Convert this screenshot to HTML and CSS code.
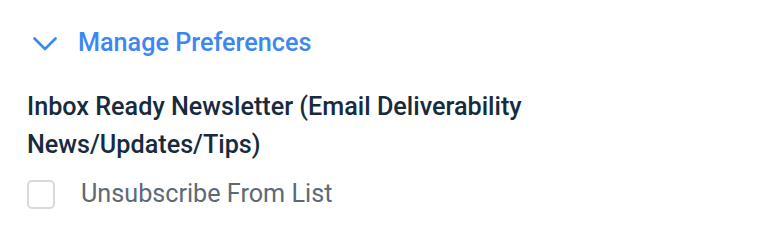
FILE: index.html
```html
<!DOCTYPE html>
<html>
<head>
<meta charset="utf-8">
<link rel="stylesheet" href="styles.css">
</head>
<body>
<div class="prefs">
  <button class="toggle">
    <svg class="chev" width="24" height="14" viewBox="0 0 24 14"><path d="M1.5 1.5 L12 12 L22.5 1.5" fill="none" stroke="#3d87f2" stroke-width="2.6" stroke-linecap="round" stroke-linejoin="round"/></svg>
    <span class="toggle-label">Manage Preferences</span>
  </button>
  <div class="list">
    <h3 class="list-title">Inbox Ready Newsletter (Email Deliverability<br>News/Updates/Tips)</h3>
    <label class="option">
      <span class="box"></span>
      <span class="option-label">Unsubscribe From List</span>
    </label>
  </div>
</div>
</body>
</html>
```
FILE: styles.css
```css
html, body {
  margin: 0;
  padding: 0;
  background: #ffffff;
}
body {
  font-family: Roboto, "Noto Sans", sans-serif;
}
.prefs {
  padding: 26px 0 0 27px;
}
.toggle {
  display: flex;
  align-items: center;
  gap: 21px;
  background: none;
  border: 0;
  padding: 2px 0 0 6px;
  margin: 0;
  font-family: inherit;
  cursor: pointer;
}
.chev {
  display: block;
}
.toggle-label {
  font-size: 25.2px;
  color: #3d87f2;
  font-weight: 500;
  line-height: 34px;
  margin-top: -2px;
}
.list {
  margin-top: 28px;
}
.list-title {
  margin: 0;
  font-size: 25.2px;
  font-weight: 500;
  line-height: 38px;
  color: #172b3e;
}
.option {
  display: flex;
  align-items: center;
  gap: 26px;
  margin-top: 15px;
}
.box {
  width: 24px;
  height: 25px;
  border: 2px solid #d6d9dd;
  border-radius: 5px;
  box-sizing: content-box;
}
.option-label {
  font-size: 25.2px;
  color: #5d6a75;
  line-height: 30px;
}
```
